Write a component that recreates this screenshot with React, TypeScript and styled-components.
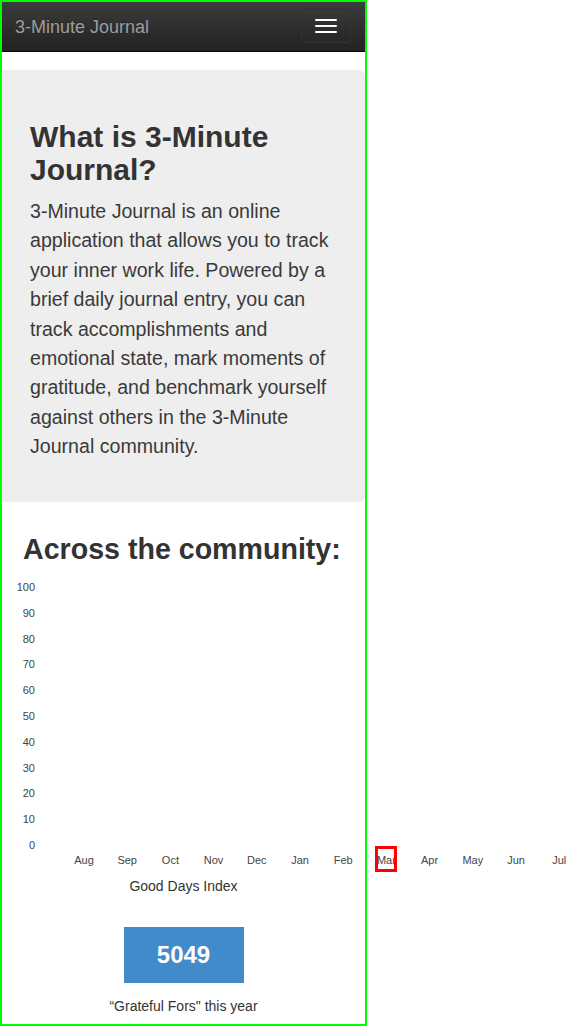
import React from "react";
import styled, { createGlobalStyle } from "styled-components";

const GlobalStyle = createGlobalStyle`
  html, body { margin: 0; padding: 0; background: #fff; }
  body { font-family: "Liberation Sans", Arial, sans-serif; color: #333; }
  * { box-sizing: border-box; }
`;

const Frame = styled.div`
  position: relative;
  width: 367px;
  height: 1026px;
  border: 2px solid #00ff00;
  overflow: visible;
`;

const Navbar = styled.nav`
  height: 50px;
  display: flex;
  align-items: flex-start;
  justify-content: space-between;
  background: linear-gradient(to bottom, #3c3c3c 0%, #222 100%);
  border-bottom: 1px solid #080808;
`;

const Brand = styled.a`
  padding: 0 0 0 13px;
  height: 49px;
  line-height: 50px;
  font-size: 18px;
  color: #9d9d9d;
  text-decoration: none;
  text-shadow: 0 -1px 0 rgba(0, 0, 0, 0.25);
`;

const Toggle = styled.button`
  margin: 6px 14px 0 0;
  width: 50px;
  height: 35px;
  padding: 10px 13px 9px;
  background: transparent;
  border: 1px solid #333;
  border-radius: 4px;
  display: flex;
  flex-direction: column;
  gap: 4px;
`;

const Bar = styled.span`
  display: block;
  width: 22px;
  height: 2px;
  background: #fff;
  border-radius: 1px;
`;

const Jumbotron = styled.section`
  margin-top: 18px;
  background: #eee;
  border-radius: 0 6px 6px 0;
  padding: 30px 28px 40px;
`;

const JumboTitle = styled.h2`
  margin: 20px 0 11px;
  font-size: 30px;
  line-height: 33px;
  font-weight: bold;
  color: #333;
`;

const Lead = styled.p`
  margin: 0;
  font-size: 19.6px;
  line-height: 29.4px;
  font-weight: 300;
  color: #3a3a3a;
`;

const Community = styled.section`
  display: flex;
  flex-direction: column;
`;

const CommunityTitle = styled.h2`
  margin: 32px 0 0;
  padding-left: 21px;
  font-size: 28.6px;
  line-height: 31.5px;
  font-weight: bold;
  color: #333;
`;

const ChartSvg = styled.svg`
  display: block;
  overflow: visible;
  font-family: "Liberation Sans", Arial, sans-serif;
  font-size: 11px;
  fill: #444;
`;

const Caption = styled.div<{ $top: number }>`
  margin-top: ${(p) => p.$top}px;
  text-align: center;
  font-size: 14px;
  line-height: 20px;
  color: #333;
`;

const Stat = styled.div`
  margin: 31px auto 0;
  width: 120px;
  height: 56px;
  line-height: 56px;
  background: #428bca;
  color: #fff;
  font-size: 24px;
  font-weight: bold;
  text-align: center;
`;

const yTicks = [100, 90, 80, 70, 60, 50, 40, 30, 20, 10, 0];
const months = ["Aug", "Sep", "Oct", "Nov", "Dec", "Jan", "Feb", "Mar", "Apr", "May", "Jun", "Jul"];

function Chart() {
  return (
    <ChartSvg width={363} height={311}>
      {yTicks.map((t, i) => (
        <text key={t} x={33} y={26 + i * 25.8} textAnchor="end">
          {t}
        </text>
      ))}
      {months.map((m, i) => (
        <text key={m} x={82 + i * 43.2} y={299} textAnchor="middle">
          {m}
        </text>
      ))}
      <rect x={374.5} y={282.5} width={19} height={23} fill="none" stroke="#ff0000" strokeWidth={3} />
    </ChartSvg>
  );
}

export default function App() {
  return (
    <>
      <GlobalStyle />
      <Frame>
        <Navbar>
          <Brand href="#">3-Minute Journal</Brand>
          <Toggle aria-label="Toggle navigation">
            <Bar />
            <Bar />
            <Bar />
          </Toggle>
        </Navbar>
        <Jumbotron>
          <JumboTitle>What is 3-Minute Journal?</JumboTitle>
          <Lead>
            3-Minute Journal is an online application that allows you to track your inner work life. Powered by a
            brief daily journal entry, you can track accomplishments and emotional state, mark moments of gratitude,
            and benchmark yourself against others in the 3-Minute Journal community.
          </Lead>
        </Jumbotron>
        <Community>
          <CommunityTitle>Across the community:</CommunityTitle>
          <Chart />
          <Caption $top={0}>Good Days Index</Caption>
          <Stat>5049</Stat>
          <Caption $top={13}>“Grateful Fors" this year</Caption>
        </Community>
      </Frame>
    </>
  );
}
